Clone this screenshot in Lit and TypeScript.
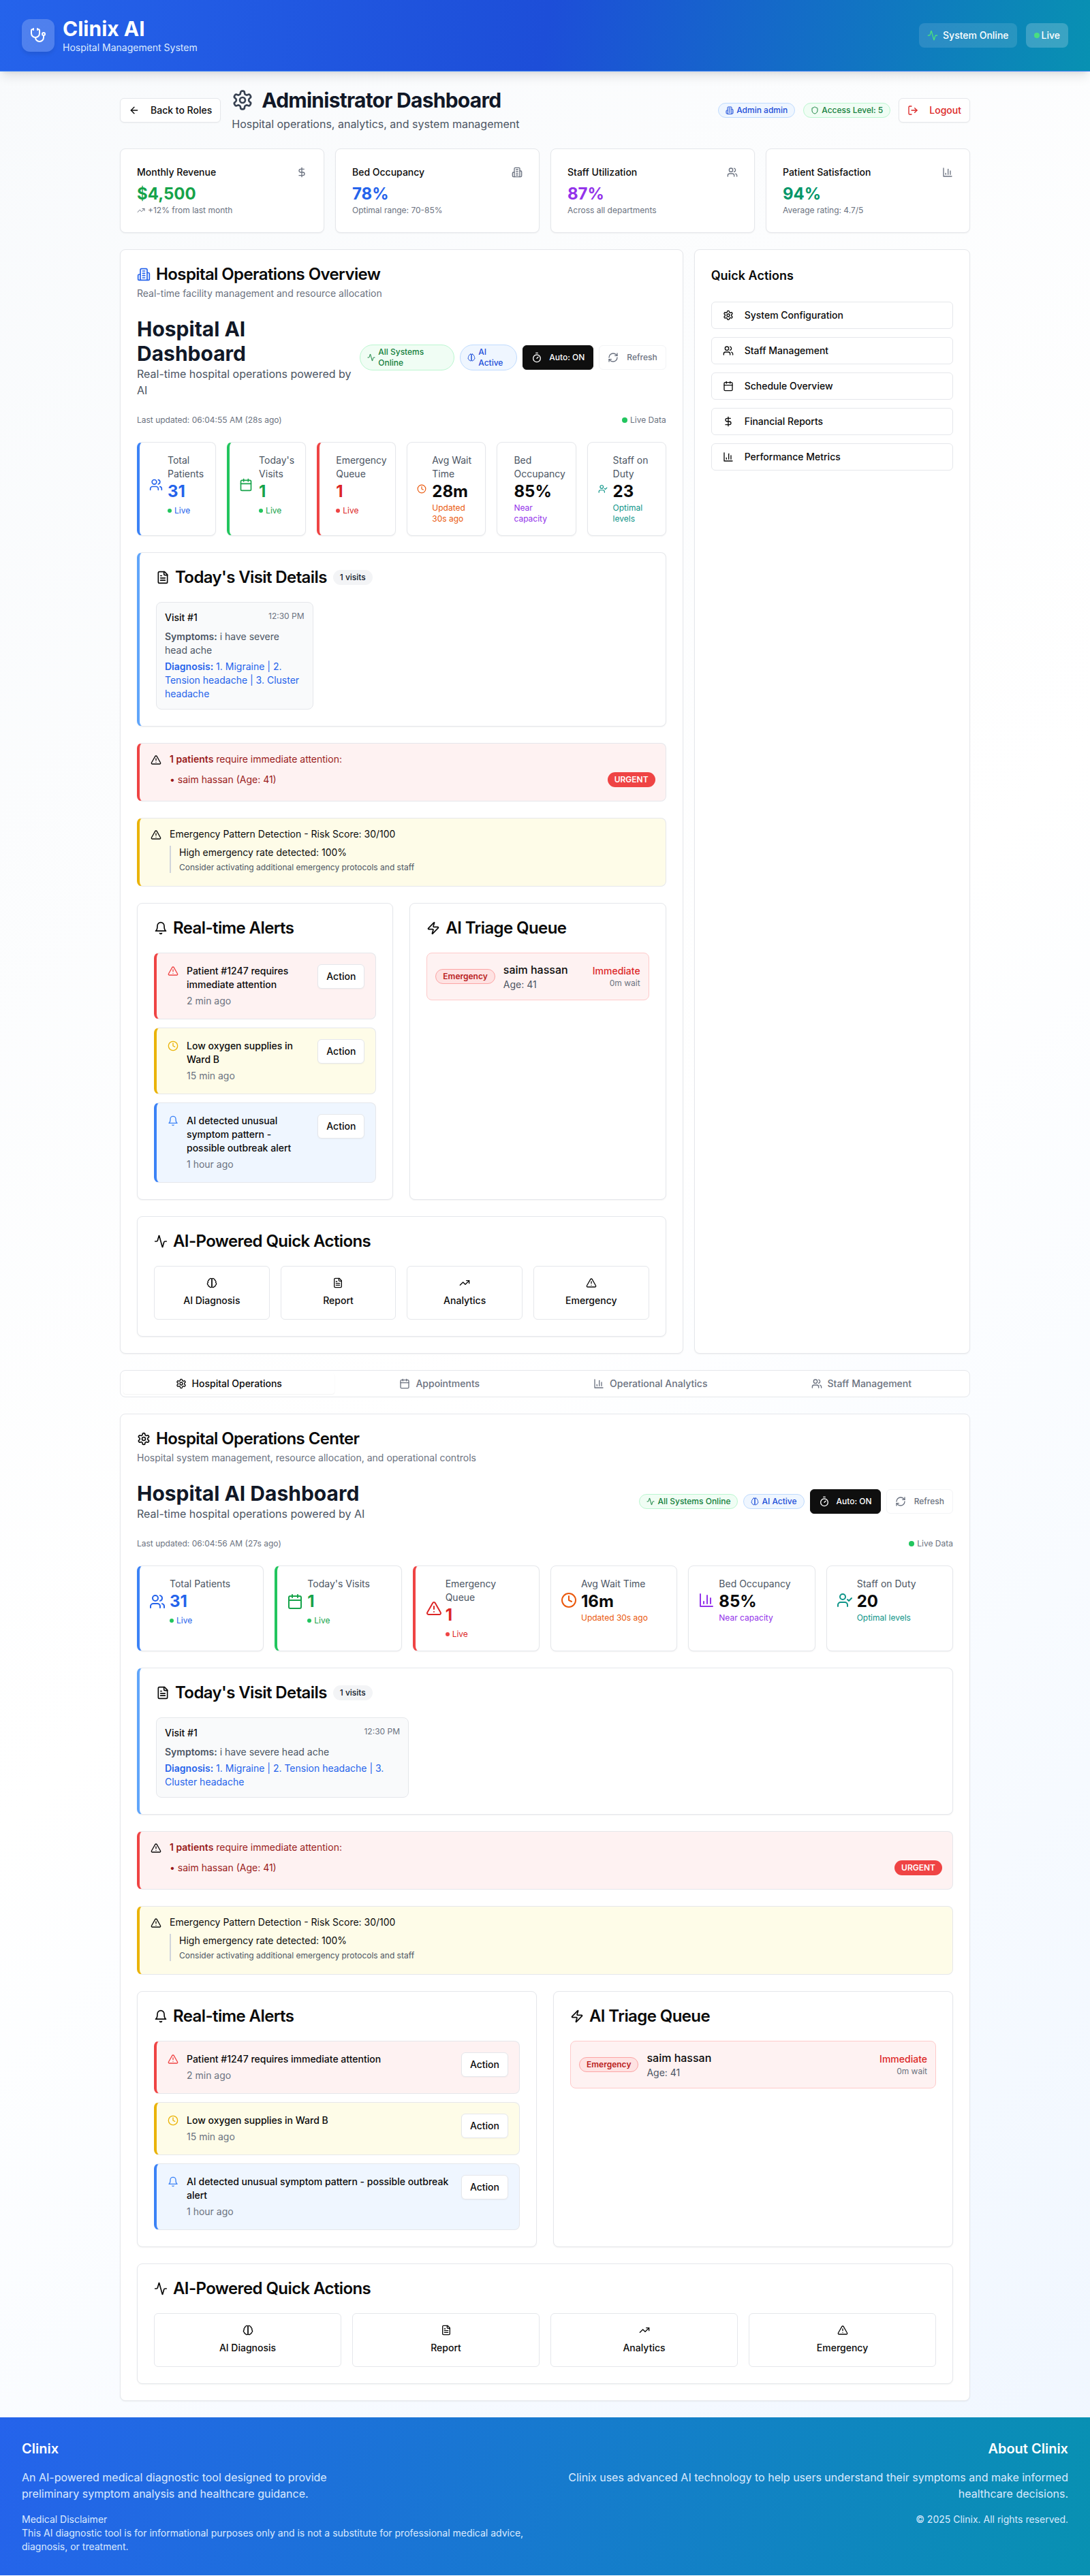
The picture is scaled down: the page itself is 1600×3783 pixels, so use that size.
import { LitElement, html, css, svg, nothing } from "lit";
import { customElement } from "lit/decorators.js";

const paths = {
  stethoscope: svg`<path d="M11 2v2"/><path d="M5 2v2"/><path d="M5 3H4a2 2 0 0 0-2 2v4a6 6 0 0 0 12 0V5a2 2 0 0 0-2-2h-1"/><path d="M8 15a6 6 0 0 0 12 0v-3"/><circle cx="20" cy="10" r="2"/>`,
  activity: svg`<path d="M22 12h-2.48a2 2 0 0 0-1.93 1.46l-2.35 8.36a.25.25 0 0 1-.48 0L9.24 2.18a.25.25 0 0 0-.48 0l-2.35 8.36A2 2 0 0 1 4.49 12H2"/>`,
  arrowLeft: svg`<path d="m12 19-7-7 7-7"/><path d="M19 12H5"/>`,
  gear: svg`<path d="M12.22 2h-.44a2 2 0 0 0-2 2v.18a2 2 0 0 1-1 1.73l-.43.25a2 2 0 0 1-2 0l-.15-.08a2 2 0 0 0-2.73.73l-.22.38a2 2 0 0 0 .73 2.73l.15.1a2 2 0 0 1 1 1.72v.51a2 2 0 0 1-1 1.74l-.15.09a2 2 0 0 0-.73 2.73l.22.38a2 2 0 0 0 2.73.73l.15-.08a2 2 0 0 1 2 0l.43.25a2 2 0 0 1 1 1.73V20a2 2 0 0 0 2 2h.44a2 2 0 0 0 2-2v-.18a2 2 0 0 1 1-1.73l.43-.25a2 2 0 0 1 2 0l.15.08a2 2 0 0 0 2.73-.73l.22-.39a2 2 0 0 0-.73-2.73l-.15-.08a2 2 0 0 1-1-1.74v-.5a2 2 0 0 1 1-1.74l.15-.09a2 2 0 0 0 .73-2.73l-.22-.38a2 2 0 0 0-2.73-.73l-.15.08a2 2 0 0 1-2 0l-.43-.25a2 2 0 0 1-1-1.73V4a2 2 0 0 0-2-2z"/><circle cx="12" cy="12" r="3"/>`,
  dollar: svg`<line x1="12" x2="12" y1="2" y2="22"/><path d="M17 5H9.5a3.5 3.5 0 0 0 0 7h5a3.5 3.5 0 0 1 0 7H6"/>`,
  building: svg`<path d="M6 22V4a2 2 0 0 1 2-2h8a2 2 0 0 1 2 2v18Z"/><path d="M6 12H4a2 2 0 0 0-2 2v6a2 2 0 0 0 2 2h2"/><path d="M18 9h2a2 2 0 0 1 2 2v9a2 2 0 0 1-2 2h-2"/><path d="M10 6h4"/><path d="M10 10h4"/><path d="M10 14h4"/><path d="M10 18h4"/>`,
  users: svg`<path d="M16 21v-2a4 4 0 0 0-4-4H6a4 4 0 0 0-4 4v2"/><circle cx="9" cy="7" r="4"/><path d="M22 21v-2a4 4 0 0 0-3-3.87"/><path d="M16 3.13a4 4 0 0 1 0 7.75"/>`,
  chart: svg`<path d="M3 3v18h18"/><path d="M18 17V9"/><path d="M13 17V5"/><path d="M8 17v-3"/>`,
  shield: svg`<path d="M20 13c0 5-3.5 7.5-7.66 8.95a1 1 0 0 1-.67-.01C7.5 20.5 4 18 4 13V6a1 1 0 0 1 1-1c2 0 4.5-1.2 6.24-2.72a1.17 1.17 0 0 1 1.52 0C14.51 3.81 17 5 19 5a1 1 0 0 1 1 1z"/>`,
  logout: svg`<path d="M9 21H5a2 2 0 0 1-2-2V5a2 2 0 0 1 2-2h4"/><path d="m16 17 5-5-5-5"/><path d="M21 12H9"/>`,
  trending: svg`<path d="M22 7 13.5 15.5 8.5 10.5 2 17"/><path d="M16 7h6v6"/>`,
  brain: svg`<path d="M9.5 2A2.5 2.5 0 0 1 12 4.5v15a2.5 2.5 0 0 1-4.96.44 2.5 2.5 0 0 1-2.96-3.08 3 3 0 0 1-.34-5.58 2.5 2.5 0 0 1 1.32-4.24 2.5 2.5 0 0 1 1.98-3A2.5 2.5 0 0 1 9.5 2Z"/><path d="M14.5 2A2.5 2.5 0 0 0 12 4.5v15a2.5 2.5 0 0 0 4.96.44 2.5 2.5 0 0 0 2.96-3.08 3 3 0 0 0 .34-5.58 2.5 2.5 0 0 0-1.32-4.24 2.5 2.5 0 0 0-1.98-3A2.5 2.5 0 0 0 14.5 2Z"/>`,
  timer: svg`<line x1="10" x2="14" y1="2" y2="2"/><line x1="12" x2="15" y1="14" y2="11"/><circle cx="12" cy="14" r="8"/>`,
  refresh: svg`<path d="M3 12a9 9 0 0 1 9-9 9.75 9.75 0 0 1 6.74 2.74L21 8"/><path d="M21 3v5h-5"/><path d="M21 12a9 9 0 0 1-9 9 9.75 9.75 0 0 1-6.74-2.74L3 16"/><path d="M8 16H3v5"/>`,
  calendar: svg`<path d="M8 2v4"/><path d="M16 2v4"/><rect width="18" height="18" x="3" y="4" rx="2"/><path d="M3 10h18"/>`,
  triangle: svg`<path d="m21.73 18-8-14a2 2 0 0 0-3.48 0l-8 14A2 2 0 0 0 4 21h16a2 2 0 0 0 1.73-3"/><path d="M12 9v4"/><path d="M12 17h.01"/>`,
  clock: svg`<circle cx="12" cy="12" r="10"/><polyline points="12 6 12 12 16 14"/>`,
  userCheck: svg`<path d="M16 21v-2a4 4 0 0 0-4-4H6a4 4 0 0 0-4 4v2"/><circle cx="9" cy="7" r="4"/><polyline points="16 11 18 13 22 9"/>`,
  file: svg`<path d="M15 2H6a2 2 0 0 0-2 2v16a2 2 0 0 0 2 2h12a2 2 0 0 0 2-2V7Z"/><path d="M14 2v4a2 2 0 0 0 2 2h4"/><path d="M10 9H8"/><path d="M16 13H8"/><path d="M16 17H8"/>`,
  bell: svg`<path d="M6 8a6 6 0 0 1 12 0c0 7 3 9 3 9H3s3-2 3-9"/><path d="M10.3 21a1.94 1.94 0 0 0 3.4 0"/>`,
  zap: svg`<path d="M4 14a1 1 0 0 1-.78-1.63l9.9-10.2a.5.5 0 0 1 .86.46l-1.92 6.02A1 1 0 0 0 13 10h7a1 1 0 0 1 .78 1.63l-9.9 10.2a.5.5 0 0 1-.86-.46l1.92-6.02A1 1 0 0 0 11 14z"/>`,
};

type IconName = keyof typeof paths;

const icon = (name: IconName, size = 16, cls = "") => html`<svg
  class="ico ${cls}"
  width=${size}
  height=${size}
  viewBox="0 0 24 24"
  fill="none"
  stroke="currentColor"
  stroke-width="2"
  stroke-linecap="round"
  stroke-linejoin="round"
>${paths[name]}</svg>`;

interface Metric {
  label: string;
  value: string;
  ic: IconName;
  size: number;
  pad: number;
  gap: number;
  tone: string;
  accent?: string;
  live?: boolean;
  sub?: string;
  width?: number;
}

const metricsA: Metric[] = [
  { label: "Total Patients", value: "31", ic: "users", size: 20, pad: 14, gap: 7, tone: "blue", accent: "blue", live: true, width: 60 },
  { label: "Today's Visits", value: "1", ic: "calendar", size: 20, pad: 14, gap: 9, tone: "green", accent: "green", live: true, width: 60 },
  { label: "Emergency Queue", value: "1", ic: "triangle", size: 0, pad: 24, gap: 0, tone: "red", accent: "red", live: true, width: 60 },
  { label: "Avg Wait Time", value: "28m", ic: "clock", size: 14, pad: 14, gap: 8, tone: "orange", sub: "Updated 30s ago", width: 60 },
  { label: "Bed Occupancy", value: "85%", ic: "chart", size: 0, pad: 24, gap: 0, tone: "purple", sub: "Near capacity", width: 60 },
  { label: "Staff on Duty", value: "23", ic: "userCheck", size: 14, pad: 15, gap: 8, tone: "teal", sub: "Optimal levels", width: 60 },
];

const metricsB: Metric[] = [
  { label: "Total Patients", value: "31", ic: "users", size: 24, pad: 14, gap: 6, tone: "blue", accent: "blue", live: true },
  { label: "Today's Visits", value: "1", ic: "calendar", size: 24, pad: 14, gap: 6, tone: "green", accent: "green", live: true },
  { label: "Emergency Queue", value: "1", ic: "triangle", size: 24, pad: 15, gap: 5, tone: "red", accent: "red", live: true, width: 90 },
  { label: "Avg Wait Time", value: "16m", ic: "clock", size: 24, pad: 14, gap: 6, tone: "orange", sub: "Updated 30s ago" },
  { label: "Bed Occupancy", value: "85%", ic: "chart", size: 24, pad: 14, gap: 6, tone: "purple", sub: "Near capacity" },
  { label: "Staff on Duty", value: "20", ic: "userCheck", size: 24, pad: 14, gap: 6, tone: "teal", sub: "Optimal levels" },
];

const stats = [
  { title: "Monthly Revenue", value: "$4,500", ic: "dollar" as IconName, tone: "green", note: "+12% from last month", trend: true },
  { title: "Bed Occupancy", value: "78%", ic: "building" as IconName, tone: "blue", note: "Optimal range: 70-85%" },
  { title: "Staff Utilization", value: "87%", ic: "users" as IconName, tone: "purple", note: "Across all departments" },
  { title: "Patient Satisfaction", value: "94%", ic: "chart" as IconName, tone: "emerald", note: "Average rating: 4.7/5" },
];

const alerts = [
  { kind: "red", ic: "triangle" as IconName, text: "Patient #1247 requires immediate attention", time: "2 min ago" },
  { kind: "amber", ic: "clock" as IconName, text: "Low oxygen supplies in Ward B", time: "15 min ago" },
  { kind: "sky", ic: "bell" as IconName, text: "AI detected unusual symptom pattern - possible outbreak alert", time: "1 hour ago" },
];

const aiActions: { ic: IconName; label: string }[] = [
  { ic: "brain", label: "AI Diagnosis" },
  { ic: "file", label: "Report" },
  { ic: "trending", label: "Analytics" },
  { ic: "triangle", label: "Emergency" },
];

const sideActions: { ic: IconName; label: string }[] = [
  { ic: "gear", label: "System Configuration" },
  { ic: "users", label: "Staff Management" },
  { ic: "calendar", label: "Schedule Overview" },
  { ic: "dollar", label: "Financial Reports" },
  { ic: "chart", label: "Performance Metrics" },
];

const tabs: { ic: IconName; label: string; active?: boolean }[] = [
  { ic: "gear", label: "Hospital Operations", active: true },
  { ic: "calendar", label: "Appointments" },
  { ic: "chart", label: "Operational Analytics" },
  { ic: "users", label: "Staff Management" },
];

@customElement("app-root")
export class AppRoot extends LitElement {
  static styles = css`
    :host {
      display: block;
      font-family: Inter, "Liberation Sans", sans-serif;
      color: #0a0a0a;
      font-size: 14px;
      line-height: 20px;
    }
    * {
      box-sizing: border-box;
    }
    h1, h2, h3, p {
      margin: 0;
    }
    .ico {
      flex: none;
      display: block;
    }
    .page {
      background: linear-gradient(135deg, #f8fafc 0%, #ffffff 50%, #eff6ff 100%);
    }

    /* top bar */
    .topbar {
      height: 105px;
      padding: 28px 32px;
      display: flex;
      justify-content: space-between;
      align-items: center;
      color: #fff;
      background: linear-gradient(100deg, #2563eb 0%, #1d4ed8 50%, #0891b2 100%);
      border-bottom: 1px solid #3b82f6;
      box-shadow: 0 10px 15px -3px rgba(0, 0, 0, 0.1), 0 4px 6px -4px rgba(0, 0, 0, 0.1);
      position: relative;
    }
    .brand {
      display: flex;
      align-items: center;
      gap: 12px;
    }
    .logo {
      width: 48px;
      height: 48px;
      border-radius: 12px;
      background: rgba(255, 255, 255, 0.2);
      display: flex;
      align-items: center;
      justify-content: center;
      box-shadow: 0 4px 6px -1px rgba(0, 0, 0, 0.1);
    }
    .brand h1 {
      font-size: 30px;
      line-height: 36px;
      font-weight: 700;
    }
    .brand p {
      color: #dbeafe;
      font-size: 14px;
      line-height: 20px;
    }
    .top-right {
      display: flex;
      gap: 13px;
    }
    .pill {
      height: 36px;
      padding: 0 12px;
      border-radius: 8px;
      background: rgba(255, 255, 255, 0.12);
      display: flex;
      align-items: center;
      gap: 7px;
      font-weight: 500;
    }
    .pill.live {
      background: rgba(255, 255, 255, 0.2);
      gap: 3px;
    }
    .pill .ico {
      color: #4ade80;
    }
    .dot {
      display: inline-block;
      border-radius: 50%;
      width: 8px;
      height: 8px;
      background: #22c55e;
      flex: none;
    }
    .pill .dot {
      background: #4ade80;
    }

    main {
      width: 1248px;
      margin: 0 auto;
      padding: 24px 0;
    }

    /* page head */
    .head {
      display: flex;
      justify-content: space-between;
      align-items: center;
      margin-bottom: 24px;
    }
    .head-left {
      display: flex;
      align-items: center;
      gap: 16px;
    }
    .head-title {
      display: flex;
      align-items: center;
      gap: 12px;
      height: 36px;
    }
    .head-title h1 {
      font-size: 30px;
      line-height: 36px;
      font-weight: 700;
      letter-spacing: -0.75px;
      color: #111827;
    }
    .head-title .ico {
      color: #374151;
    }
    .head-sub {
      font-size: 16px;
      line-height: 24px;
      color: #4b5563;
      margin-top: 5px;
    }
    .head-right {
      display: flex;
      align-items: center;
      gap: 12px;
    }
    .btn {
      height: 36px;
      padding: 0 12px;
      display: inline-flex;
      align-items: center;
      gap: 16px;
      border: 1px solid #e5e7eb;
      border-radius: 6px;
      background: #fff;
      font-weight: 500;
      box-shadow: 0 1px 2px rgba(0, 0, 0, 0.04);
      white-space: nowrap;
    }
    .btn.logout {
      color: #dc2626;
    }
    .chip {
      display: inline-flex;
      align-items: center;
      gap: 4px;
      padding: 2px 10px;
      border: 1px solid;
      border-radius: 999px;
      font-size: 12px;
      line-height: 16px;
      font-weight: 500;
    }
    .chip.sky {
      background: #eff6ff;
      border-color: #bfdbfe;
      color: #1d4ed8;
    }
    .chip.mint {
      background: #f0fdf4;
      border-color: #bbf7d0;
      color: #15803d;
    }

    /* cards */
    .card {
      background: #fff;
      border: 1px solid #e5e7eb;
      border-radius: 8px;
      box-shadow: 0 1px 2px rgba(0, 0, 0, 0.05);
    }
    .stats {
      display: grid;
      grid-template-columns: repeat(4, 1fr);
      gap: 16px;
      margin-bottom: 24px;
    }
    .stat {
      padding: 24px;
    }
    .stat-top {
      display: flex;
      justify-content: space-between;
      align-items: center;
      font-weight: 500;
      margin-bottom: 6px;
    }
    .stat-top .ico {
      color: #6b7280;
    }
    .stat-value {
      font-size: 24px;
      line-height: 32px;
      font-weight: 700;
    }
    .stat-note {
      font-size: 12px;
      line-height: 16px;
      color: #6b7280;
      display: flex;
      align-items: center;
      gap: 4px;
    }
    .blue { color: #2563eb; }
    .green { color: #16a34a; }
    .red { color: #dc2626; }
    .orange { color: #ea580c; }
    .purple { color: #9333ea; }
    .teal { color: #0d9488; }
    .emerald { color: #059669; }

    .columns {
      display: grid;
      grid-template-columns: repeat(3, minmax(0, 1fr));
      gap: 16px;
      margin-bottom: 24px;
    }
    .span2 {
      grid-column: span 2;
      min-width: 0;
    }
    .pad {
      padding: 24px;
    }
    .card-title {
      display: flex;
      align-items: center;
      gap: 8px;
      font-size: 24px;
      line-height: 24px;
      font-weight: 600;
      letter-spacing: -0.6px;
    }
    .card-desc {
      margin-top: 6px;
      color: #6b7280;
    }
    .card-body {
      margin-top: 24px;
      display: flex;
      flex-direction: column;
      gap: 24px;
    }

    /* dashboard head */
    .dash-head {
      display: flex;
      justify-content: space-between;
      align-items: center;
    }
    .dash-title h2 {
      font-size: 30px;
      line-height: 36px;
      font-weight: 700;
      color: #111827;
    }
    .dash-title p {
      font-size: 16px;
      line-height: 24px;
      color: #4b5563;
    }
    .narrow .dash-title {
      width: 322px;
    }
    .dash-tools {
      display: flex;
      align-items: center;
      gap: 8px;
    }
    .narrow .chip.mint {
      width: 139px;
    }
    .narrow .chip.sky {
      width: 84px;
    }
    .btn.dark {
      background: #0f0f0f;
      border-color: #0f0f0f;
      color: #fff;
      font-size: 12px;
      line-height: 16px;
      gap: 10px;
    }
    .btn.ghost {
      color: #6b7280;
      font-size: 12px;
      line-height: 16px;
      border-color: #f3f4f6;
      box-shadow: none;
      gap: 12px;
    }
    .dash-status {
      display: flex;
      justify-content: space-between;
      font-size: 12px;
      line-height: 16px;
      color: #6b7280;
    }
    .live-data {
      display: flex;
      align-items: center;
      gap: 4px;
    }

    /* metrics */
    .metrics {
      display: grid;
      grid-template-columns: repeat(6, minmax(0, 1fr));
      gap: 16px;
    }
    .metric {
      padding-top: 16px;
      padding-bottom: 16px;
      display: flex;
      align-items: flex-start;
      overflow: hidden;
    }
    .metric.accent-blue { border-left: 4px solid #3b82f6; }
    .metric.accent-green { border-left: 4px solid #22c55e; }
    .metric.accent-red { border-left: 4px solid #ef4444; }
    .metric-in {
      display: flex;
      align-items: center;
    }
    .metric-label {
      color: #4b5563;
    }
    .metric-value {
      font-size: 24px;
      line-height: 32px;
      font-weight: 700;
      color: #0a0a0a;
    }
    .metric-value.blue { color: #2563eb; }
    .metric-value.green { color: #16a34a; }
    .metric-value.red { color: #dc2626; }
    .metric-sub {
      font-size: 12px;
      line-height: 16px;
    }
    .metric-live {
      margin-top: 4px;
      font-size: 12px;
      line-height: 16px;
      display: flex;
      align-items: center;
      gap: 4px;
    }
    .metric-live .dot {
      width: 6px;
      height: 6px;
    }
    .metric-live.red .dot {
      background: #ef4444;
    }

    /* visits */
    .visits {
      border-left: 4px solid #60a5fa;
    }
    .visit-badge {
      margin-left: 1px;
      height: 22px;
      padding: 0 10px;
      display: inline-flex;
      align-items: center;
      border-radius: 11px;
      background: #f3f4f6;
      color: #0f172a;
      font-size: 12px;
      line-height: 16px;
      font-weight: 500;
      letter-spacing: 0;
    }
    .visit-grid {
      margin-top: 24px;
      display: grid;
      grid-template-columns: repeat(3, minmax(0, 1fr));
      gap: 16px;
    }
    .visit {
      padding: 12px;
      border: 1px solid #e5e7eb;
      border-radius: 8px;
      background: #f9fafb;
    }
    .visit-top {
      display: flex;
      justify-content: space-between;
      align-items: flex-start;
      margin-bottom: 8px;
      font-weight: 500;
    }
    .visit-time {
      font-size: 12px;
      line-height: 16px;
      font-weight: 400;
      color: #6b7280;
    }
    .visit-sym {
      color: #4b5563;
    }
    .visit-sym b,
    .visit-dx b {
      font-weight: 600;
    }
    .visit-dx {
      color: #2563eb;
      margin-top: 4px;
    }

    /* banners */
    .banner {
      display: flex;
      gap: 12px;
      padding: 13px 16px 19px;
      border: 1px solid #e5e7eb;
      border-left-width: 4px;
      border-radius: 8px;
    }
    .banner.crit {
      background: #fef2f2;
      border-left-color: #ef4444;
      color: #991b1b;
      padding-bottom: 20px;
    }
    .banner.warn {
      background: #fefce8;
      border-left-color: #eab308;
      color: #0a0a0a;
    }
    .banner > .ico {
      margin-top: 3px;
      color: #0a0a0a;
    }
    .banner-body {
      flex: 1;
      min-width: 0;
    }
    .banner b {
      font-weight: 600;
    }
    .crit-row {
      margin-top: 9px;
      display: flex;
      justify-content: space-between;
      align-items: center;
    }
    .urgent {
      height: 22px;
      padding: 0 10px;
      margin-right: -1px;
      display: inline-flex;
      align-items: center;
      border-radius: 11px;
      background: #ef4444;
      color: #fff;
      font-size: 12px;
      font-weight: 600;
    }
    .warn-note {
      margin-top: 7px;
      padding-left: 12px;
      border-left: 2px solid #d1d5db;
    }
    .warn-note small {
      display: block;
      margin-top: 4px;
      font-size: 12px;
      line-height: 16px;
      color: #4b5563;
    }

    /* alerts and triage */
    .pair {
      display: grid;
      grid-template-columns: repeat(2, minmax(0, 1fr));
      gap: 24px;
    }
    .stack {
      margin-top: 24px;
      display: flex;
      flex-direction: column;
      gap: 12px;
    }
    .alert {
      display: flex;
      align-items: flex-start;
      gap: 12px;
      padding: 16px;
      border: 1px solid #e5e7eb;
      border-left-width: 4px;
      border-radius: 8px;
    }
    .alert.red {
      background: #fef2f2;
      border-left-color: #ef4444;
      color: inherit;
    }
    .alert.red > .ico { color: #ef4444; }
    .alert.amber {
      background: #fefce8;
      border-left-color: #eab308;
    }
    .alert.amber > .ico { color: #eab308; }
    .alert.sky {
      background: #eff6ff;
      border-left-color: #3b82f6;
    }
    .alert.sky > .ico { color: #3b82f6; }
    .alert-body {
      flex: 1;
      min-width: 0;
      font-weight: 500;
      color: #0a0a0a;
    }
    .alert-time {
      margin-top: 4px;
      color: #6b7280;
      font-weight: 400;
    }
    .alert .ico {
      margin-top: 2px;
    }
    .act {
      flex: none;
      height: 36px;
      padding: 0 12px;
      display: flex;
      align-items: center;
      border: 1px solid #e5e7eb;
      border-radius: 6px;
      background: #fff;
      font-weight: 500;
      box-shadow: 0 1px 2px rgba(0, 0, 0, 0.04);
    }
    .triage {
      display: flex;
      align-items: center;
      gap: 12px;
      padding: 12px;
      background: #fef2f2;
      border: 1px solid #fecaca;
      border-radius: 8px;
    }
    .triage-tag {
      height: 22px;
      padding: 0 10px;
      display: flex;
      align-items: center;
      border: 1px solid #fca5a5;
      border-radius: 11px;
      background: #fee2e2;
      color: #b91c1c;
      font-size: 12px;
      font-weight: 600;
    }
    .triage-name {
      font-size: 16px;
      line-height: 24px;
      font-weight: 500;
    }
    .triage-age {
      color: #4b5563;
    }
    .triage-right {
      margin-left: auto;
      text-align: right;
    }
    .triage-urgency {
      color: #dc2626;
      font-weight: 500;
    }
    .triage-wait {
      font-size: 12px;
      line-height: 16px;
      color: #6b7280;
    }
    .ai-grid {
      margin-top: 24px;
      display: grid;
      grid-template-columns: repeat(4, minmax(0, 1fr));
      gap: 16px;
    }
    .ai-btn {
      padding: 16px 16px 17px;
      display: flex;
      flex-direction: column;
      align-items: center;
      gap: 8px;
      border: 1px solid #e5e7eb;
      border-radius: 6px;
      background: #fff;
      font-weight: 500;
    }

    /* side panel */
    .side h3 {
      font-size: 18px;
      line-height: 28px;
      font-weight: 600;
    }
    .side-list {
      margin-top: 24px;
      display: flex;
      flex-direction: column;
      gap: 12px;
    }
    .side-btn {
      height: 40px;
      padding: 0 16px;
      display: flex;
      align-items: center;
      gap: 16px;
      border: 1px solid #e5e7eb;
      border-radius: 6px;
      background: #fff;
      font-weight: 500;
    }

    /* tabs */
    .tabs {
      height: 40px;
      padding: 4px;
      margin-bottom: 24px;
      display: grid;
      grid-template-columns: repeat(4, 1fr);
      background: #fff;
      border: 1px solid #e5e7eb;
      border-radius: 8px;
    }
    .tab {
      display: flex;
      align-items: center;
      justify-content: center;
      gap: 8px;
      font-weight: 500;
      color: #6b7280;
      border-radius: 4px;
    }
    .tab.active {
      color: #0a0a0a;
      background: #fff;
      box-shadow: 0 1px 2px rgba(0, 0, 0, 0.05);
    }

    /* footer */
    footer {
      height: 232px;
      padding: 32px;
      display: grid;
      grid-template-columns: repeat(2, 1fr);
      gap: 32px;
      color: #dbeafe;
      background: linear-gradient(100deg, #2563eb 0%, #0891b2 100%);
    }
    footer h4 {
      margin: 0 0 16px;
      font-size: 20px;
      line-height: 28px;
      font-weight: 600;
      color: #fff;
    }
    footer p {
      font-size: 16px;
      line-height: 24px;
    }
    footer .small {
      margin-top: 16px;
      font-size: 14px;
      line-height: 20px;
    }
    .foot-left p:first-of-type {
      max-width: 520px;
    }
    .foot-right {
      text-align: right;
    }
  `;

  private renderMetric(m: Metric) {
    const accent = m.accent ? `accent-${m.accent}` : "";
    return html`
      <div class="card metric ${accent}" style="padding-left:${m.pad}px">
        <div class="metric-in" style="gap:${m.gap}px">
          ${m.size ? html`<span class=${m.tone}>${icon(m.ic, m.size)}</span>` : nothing}
          <div style=${m.width ? `width:${m.width}px` : ""}>
            <div class="metric-label">${m.label}</div>
            <div class="metric-value ${m.accent ? m.tone : ""}">${m.value}</div>
            ${m.live
              ? html`<div class="metric-live ${m.tone}"><span class="dot"></span>Live</div>`
              : html`<div class="metric-sub ${m.tone}">${m.sub}</div>`}
          </div>
        </div>
      </div>
    `;
  }

  private renderDashboard(narrow: boolean, updated: string, metrics: Metric[]) {
    return html`
      <div class="card-body ${narrow ? "narrow" : ""}">
        <div class="dash-head">
          <div class="dash-title">
            <h2>Hospital AI Dashboard</h2>
            <p>Real-time hospital operations powered by AI</p>
          </div>
          <div class="dash-tools">
            <span class="chip mint">${icon("activity", 12)}<span>All Systems Online</span></span>
            <span class="chip sky">${icon("brain", 12)}<span>AI Active</span></span>
            <span class="btn dark">${icon("timer", 16)}Auto: ON</span>
            <span class="btn ghost">${icon("refresh", 16)}Refresh</span>
          </div>
        </div>
        <div class="dash-status">
          <span>Last updated: ${updated}</span>
          <span class="live-data"><span class="dot"></span>Live Data</span>
        </div>
        <div class="metrics">${metrics.map((m) => this.renderMetric(m))}</div>

        <section class="card pad visits">
          <div class="card-title">
            ${icon("file", 20)}Today's Visit Details<span class="visit-badge">1 visits</span>
          </div>
          <div class="visit-grid">
            <div class="visit">
              <div class="visit-top"><span>Visit #1</span><span class="visit-time">12:30 PM</span></div>
              <div class="visit-sym"><b>Symptoms:</b> i have severe head ache</div>
              <div class="visit-dx"><b>Diagnosis:</b> 1. Migraine | 2. Tension headache | 3. Cluster headache</div>
            </div>
          </div>
        </section>

        <section class="banner crit">
          ${icon("triangle", 16)}
          <div class="banner-body">
            <div><b>1 patients</b> require immediate attention:</div>
            <div class="crit-row"><span>• saim hassan (Age: 41)</span><span class="urgent">URGENT</span></div>
          </div>
        </section>

        <section class="banner warn">
          ${icon("triangle", 16)}
          <div class="banner-body">
            <div>Emergency Pattern Detection - Risk Score: 30/100</div>
            <div class="warn-note">
              High emergency rate detected: 100%
              <small>Consider activating additional emergency protocols and staff</small>
            </div>
          </div>
        </section>

        <div class="pair">
          <section class="card pad">
            <div class="card-title">${icon("bell", 20)}Real-time Alerts</div>
            <div class="stack">
              ${alerts.map(
                (a) => html`
                  <div class="alert ${a.kind}">
                    ${icon(a.ic, 16)}
                    <div class="alert-body">
                      ${a.text}
                      <div class="alert-time">${a.time}</div>
                    </div>
                    <span class="act">Action</span>
                  </div>
                `,
              )}
            </div>
          </section>
          <section class="card pad">
            <div class="card-title">${icon("zap", 20)}AI Triage Queue</div>
            <div class="stack">
              <div class="triage">
                <span class="triage-tag">Emergency</span>
                <div>
                  <div class="triage-name">saim hassan</div>
                  <div class="triage-age">Age: 41</div>
                </div>
                <div class="triage-right">
                  <div class="triage-urgency">Immediate</div>
                  <div class="triage-wait">0m wait</div>
                </div>
              </div>
            </div>
          </section>
        </div>

        <section class="card pad">
          <div class="card-title">${icon("activity", 20)}AI-Powered Quick Actions</div>
          <div class="ai-grid">
            ${aiActions.map((a) => html`<div class="ai-btn">${icon(a.ic, 16)}${a.label}</div>`)}
          </div>
        </section>
      </div>
    `;
  }

  protected render() {
    return html`
      <div class="page">
        <header class="topbar">
          <div class="brand">
            <div class="logo">${icon("stethoscope", 24)}</div>
            <div>
              <h1>Clinix AI</h1>
              <p>Hospital Management System</p>
            </div>
          </div>
          <div class="top-right">
            <div class="pill">${icon("activity", 16)}System Online</div>
            <div class="pill live"><span class="dot"></span>Live</div>
          </div>
        </header>

        <main>
          <div class="head">
            <div class="head-left">
              <span class="btn">${icon("arrowLeft", 16)}Back to Roles</span>
              <div>
                <div class="head-title">${icon("gear", 32)}<h1>Administrator Dashboard</h1></div>
                <p class="head-sub">Hospital operations, analytics, and system management</p>
              </div>
            </div>
            <div class="head-right">
              <span class="chip sky">${icon("building", 12)}Admin admin</span>
              <span class="chip mint">${icon("shield", 12)}Access Level: 5</span>
              <span class="btn logout">${icon("logout", 16)}Logout</span>
            </div>
          </div>

          <div class="stats">
            ${stats.map(
              (s) => html`
                <div class="card stat">
                  <div class="stat-top"><span>${s.title}</span>${icon(s.ic, 16)}</div>
                  <div class="stat-value ${s.tone}">${s.value}</div>
                  <div class="stat-note">${s.trend ? icon("trending", 12) : nothing}${s.note}</div>
                </div>
              `,
            )}
          </div>

          <div class="columns">
            <section class="card pad span2">
              <div class="card-title">${icon("building", 20, "blue")}Hospital Operations Overview</div>
              <p class="card-desc">Real-time facility management and resource allocation</p>
              ${this.renderDashboard(true, "06:04:55 AM (28s ago)", metricsA)}
            </section>
            <aside class="card pad side">
              <h3>Quick Actions</h3>
              <div class="side-list">
                ${sideActions.map((a) => html`<div class="side-btn">${icon(a.ic, 16)}${a.label}</div>`)}
              </div>
            </aside>
          </div>

          <nav class="tabs">
            ${tabs.map(
              (t) => html`<div class="tab ${t.active ? "active" : ""}">${icon(t.ic, 16)}${t.label}</div>`,
            )}
          </nav>

          <section class="card pad">
            <div class="card-title">${icon("gear", 20)}Hospital Operations Center</div>
            <p class="card-desc">Hospital system management, resource allocation, and operational controls</p>
            ${this.renderDashboard(false, "06:04:56 AM (27s ago)", metricsB)}
          </section>
        </main>

        <footer>
          <div class="foot-left">
            <h4>Clinix</h4>
            <p>An AI-powered medical diagnostic tool designed to provide preliminary symptom analysis and healthcare guidance.</p>
            <p class="small">Medical Disclaimer<br />This AI diagnostic tool is for informational purposes only and is not a substitute for professional medical advice, diagnosis, or treatment.</p>
          </div>
          <div class="foot-right">
            <h4>About Clinix</h4>
            <p>Clinix uses advanced AI technology to help users understand their symptoms and make informed healthcare decisions.</p>
            <p class="small">© 2025 Clinix. All rights reserved.</p>
          </div>
        </footer>
      </div>
    `;
  }
}

declare global {
  interface HTMLElementTagNameMap {
    "app-root": AppRoot;
  }
}
